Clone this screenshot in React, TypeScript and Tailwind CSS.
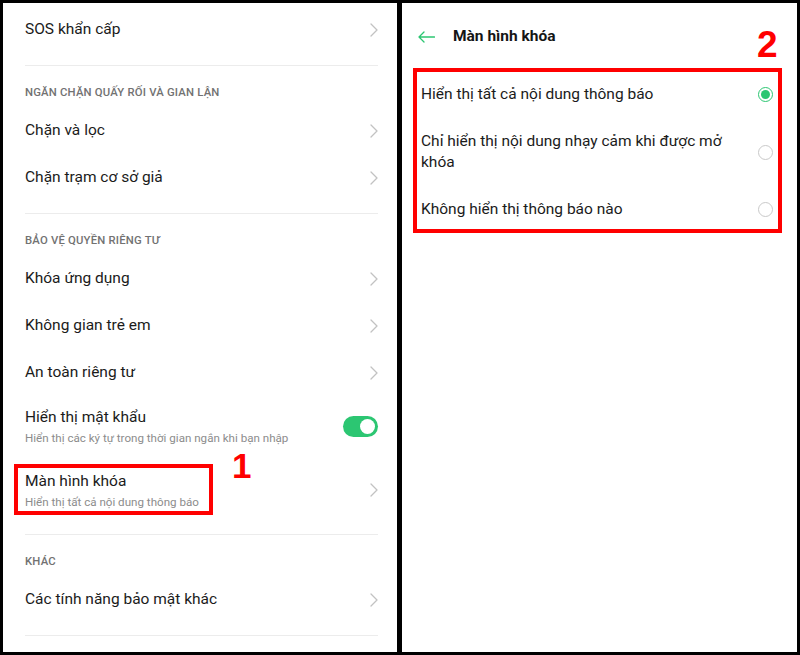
import React from "react";

function Chevron() {
  return (
    <svg width="8" height="14" viewBox="0 0 8 14" fill="none" className="shrink-0">
      <path d="M1 1 L7 7 L1 13" stroke="#c2c2c2" strokeWidth="1.3" strokeLinecap="round" strokeLinejoin="round" />
    </svg>
  );
}

function Divider({ className = "" }: { className?: string }) {
  return <div className={`h-px bg-[#ececec] ${className}`} />;
}

function SectionHeader({ label, className = "" }: { label: string; className?: string }) {
  return (
    <p className={`text-[11.3px] leading-4 font-medium tracking-[0.2px] text-[#727272] uppercase ${className}`}>
      {label}
    </p>
  );
}

function NavRow({ label, className = "" }: { label: string; className?: string }) {
  return (
    <div className={`flex h-[47px] items-center justify-between ${className}`}>
      <span className="text-[15.5px] text-[#1b1b1b]">{label}</span>
      <Chevron />
    </div>
  );
}

function TwoLineRow({
  title,
  subtitle,
  right,
  className = "",
}: {
  title: string;
  subtitle: string;
  right: React.ReactNode;
  className?: string;
}) {
  return (
    <div className={`flex items-center justify-between ${className}`}>
      <div>
        <p className="text-[15.5px] leading-[22px] text-[#1b1b1b]">{title}</p>
        <p className="mt-[2px] text-[11.6px] leading-4 text-[#8c8c8c]">{subtitle}</p>
      </div>
      {right}
    </div>
  );
}

function Toggle() {
  return (
    <div className="flex h-[21px] w-[35px] shrink-0 items-center justify-end rounded-full bg-[#2cc672] pr-[3px]">
      <div className="h-[15px] w-[15px] rounded-full bg-white" />
    </div>
  );
}

function Radio({ checked }: { checked?: boolean }) {
  if (checked) {
    return (
      <div className="flex h-[15px] w-[15px] shrink-0 items-center justify-center rounded-full border-[1.5px] border-[#2cc672]">
        <div className="h-[9px] w-[9px] rounded-full bg-[#2cc672]" />
      </div>
    );
  }
  return <div className="h-[15px] w-[15px] shrink-0 rounded-full border-[1.3px] border-[#c9c9c9]" />;
}

const options = [
  { label: "Hiển thị tất cả nội dung thông báo", checked: true },
  { label: "Chỉ hiển thị nội dung nhạy cảm khi được mở khóa", checked: false },
  { label: "Không hiển thị thông báo nào", checked: false },
];

export default function App() {
  return (
    <div className="flex h-[655px] w-[800px] gap-[5px] bg-black pt-[3px] pr-[3px] pb-[3px] pl-[3px] font-[Roboto,sans-serif]">
      {/* left: security settings */}
      <div className="relative w-[394px] overflow-hidden bg-white pt-[3px] pr-[19px] pl-[22px]">
        <NavRow label="SOS khẩn cấp" />
        <Divider className="mt-[12px]" />

        <SectionHeader label="Ngăn chặn quấy rối và gian lận" className="mt-[19px]" />
        <NavRow label="Chặn và lọc" className="mt-[6px]" />
        <NavRow label="Chặn trạm cơ sở giả" />
        <Divider className="mt-[12px]" />

        <SectionHeader label="Bảo vệ quyền riêng tư" className="mt-[19px]" />
        <NavRow label="Khóa ứng dụng" className="mt-[6px]" />
        <NavRow label="Không gian trẻ em" />
        <NavRow label="An toàn riêng tư" />
        <TwoLineRow
          title="Hiển thị mật khẩu"
          subtitle="Hiển thị các ký tự trong thời gian ngắn khi bạn nhập"
          right={<Toggle />}
          className="mt-[10px]"
        />
        <TwoLineRow
          title="Màn hình khóa"
          subtitle="Hiển thị tất cả nội dung thông báo"
          right={<Chevron />}
          className="mt-[24px]"
        />
        <Divider className="mt-[24px]" />

        <SectionHeader label="Khác" className="mt-[19px]" />
        <NavRow label="Các tính năng bảo mật khác" className="mt-[6px]" />
        <Divider className="mt-[12px]" />

        {/* annotation 1 */}
        <div className="absolute top-[461px] left-[11px] h-[51px] w-[199px] border-4 border-[#ff0000]" />
        <span className="absolute top-[445px] left-[229px] font-['Liberation_Sans',Arial,sans-serif] text-[35px] leading-none font-bold text-[#ff0000]">
          1
        </span>
      </div>

      {/* right: lock screen options */}
      <div className="relative flex-1 overflow-hidden bg-white">
        <div className="flex h-[68px] items-center gap-[18px] pl-[16px]">
          <svg width="17" height="12" viewBox="0 0 17 12" fill="none">
            <path d="M16.5 6 H1 M6 1 L1 6 L6 11" stroke="#2cc672" strokeWidth="1.3" strokeLinecap="round" strokeLinejoin="round" />
          </svg>
          <span className="text-[15.5px] font-bold text-[#151515]">Màn hình khóa</span>
        </div>

        <div className="pr-[24px] pl-[19px]">
          {options.map((option, index) => (
            <div
              key={option.label}
              className={`flex items-center justify-between gap-6 ${index === 1 ? "py-[13px]" : "h-[47px]"}`}
            >
              <span className="text-[15.5px] leading-[21px] text-[#1b1b1b]">{option.label}</span>
              <Radio checked={option.checked} />
            </div>
          ))}
        </div>

        {/* annotation 2 */}
        <div className="absolute top-[65px] left-[11px] h-[165px] w-[369px] border-4 border-[#ff0000]" />
        <span className="absolute top-[23px] left-[355px] font-['Liberation_Sans',Arial,sans-serif] text-[37px] leading-none font-bold text-[#ff0000]">
          2
        </span>
      </div>
    </div>
  );
}
